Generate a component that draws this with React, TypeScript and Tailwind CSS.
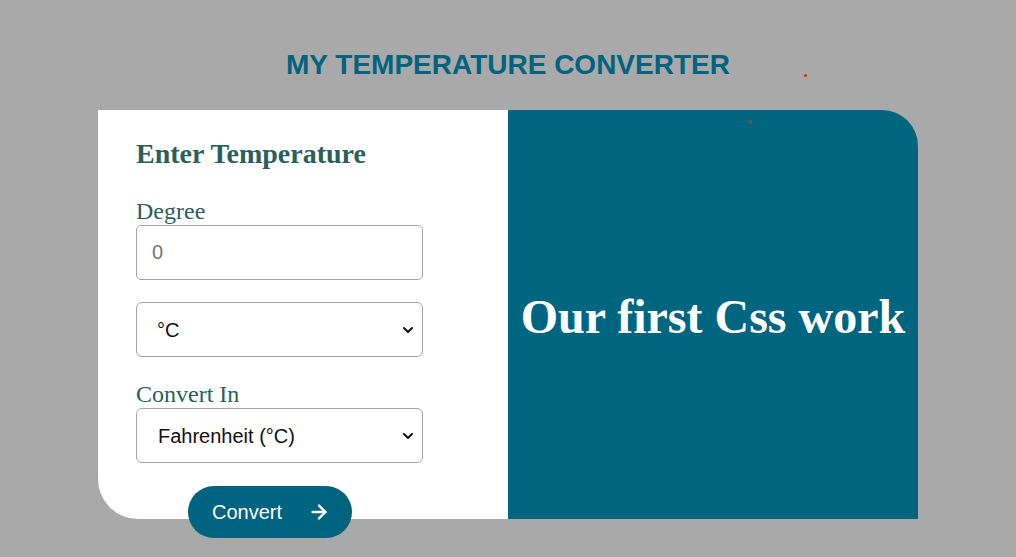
import React from "react";
import { ArrowRight } from "lucide-react";

function Chevron() {
  return (
    <svg width="12" height="12" viewBox="0 0 12 12" className="pointer-events-none absolute right-[9px] top-1/2 -translate-y-1/2">
      <path d="M2 4 L6 8 L10 4" fill="none" stroke="#111" strokeWidth="2" strokeLinecap="round" strokeLinejoin="round" />
    </svg>
  );
}

export default function App() {
  return (
    <div className="relative min-h-[557px] w-full bg-[#a9a9a9] flex flex-col items-center" style={{ fontFamily: '"Liberation Sans", Arial, sans-serif' }}>
      <h1 className="mt-[50px] h-[30px] text-[28px] leading-[30px] font-bold text-[#00637f]">MY TEMPERATURE CONVERTER</h1>
      <span className="absolute left-[804px] top-[74px] w-[3px] h-[3px] rounded-full bg-[#e0202a]" />
      <div className="mt-[30px] w-[820px] h-[409px] flex relative">
        <div className="w-[410px] h-full bg-white rounded-bl-[40px] pl-[38px] pt-[29px]" style={{ fontFamily: '"Liberation Serif", "Times New Roman", serif' }}>
          <h2 className="text-[28px] leading-[30px] font-bold text-[#2c5e5c]">Enter Temperature</h2>
          <label className="block mt-[30px] text-[24px] leading-[24px] text-[#2c5e5c]">Degree</label>
          <input
            placeholder="0"
            className="block mt-[2px] w-[287px] h-[55px] border border-[#a3a3a3] rounded-[5px] px-[15px] text-[20px] text-[#333] placeholder:text-[#777] outline-none"
            style={{ fontFamily: '"Liberation Sans", Arial, sans-serif' }}
          />
          <div className="relative mt-[22px] w-[287px] h-[55px]">
            <select
              className="appearance-none w-full h-full border border-[#a3a3a3] rounded-[6px] pl-[20px] text-[20px] text-[#111] bg-white outline-none"
              style={{ fontFamily: '"Liberation Sans", Arial, sans-serif' }}
              defaultValue="c"
            >
              <option value="c">°C</option>
              <option value="f">°F</option>
            </select>
            <Chevron />
          </div>
          <label className="block mt-[25px] text-[24px] leading-[24px] text-[#2c5e5c]">Convert In</label>
          <div className="relative mt-[2px] w-[287px] h-[55px]">
            <select
              className="appearance-none w-full h-full border border-[#a3a3a3] rounded-[6px] pl-[21px] text-[20px] text-[#111] bg-white outline-none"
              style={{ fontFamily: '"Liberation Sans", Arial, sans-serif' }}
              defaultValue="f"
            >
              <option value="f">Fahrenheit (°C)</option>
              <option value="k">Kelvin (K)</option>
            </select>
            <Chevron />
          </div>
        </div>
        <div className="w-[410px] h-full bg-[#00657f] rounded-tr-[36px] flex items-center justify-center" style={{ fontFamily: '"Liberation Serif", "Times New Roman", serif' }}>
          <p className="text-[48px] leading-[56px] font-bold text-white mt-[4px]">Our first Css work</p>
        </div>
        <span className="absolute left-[651px] top-[10px] w-[3px] h-[3px] rounded-full bg-[#c0304a]" />
        <button className="absolute left-[90px] top-[376px] w-[164px] h-[52px] rounded-full bg-[#00637f] text-white text-[20px] flex items-center justify-center gap-[26px] pl-[2px]">
          <span>Convert</span>
          <ArrowRight size={22} strokeWidth={2.6} />
        </button>
      </div>
    </div>
  );
}
